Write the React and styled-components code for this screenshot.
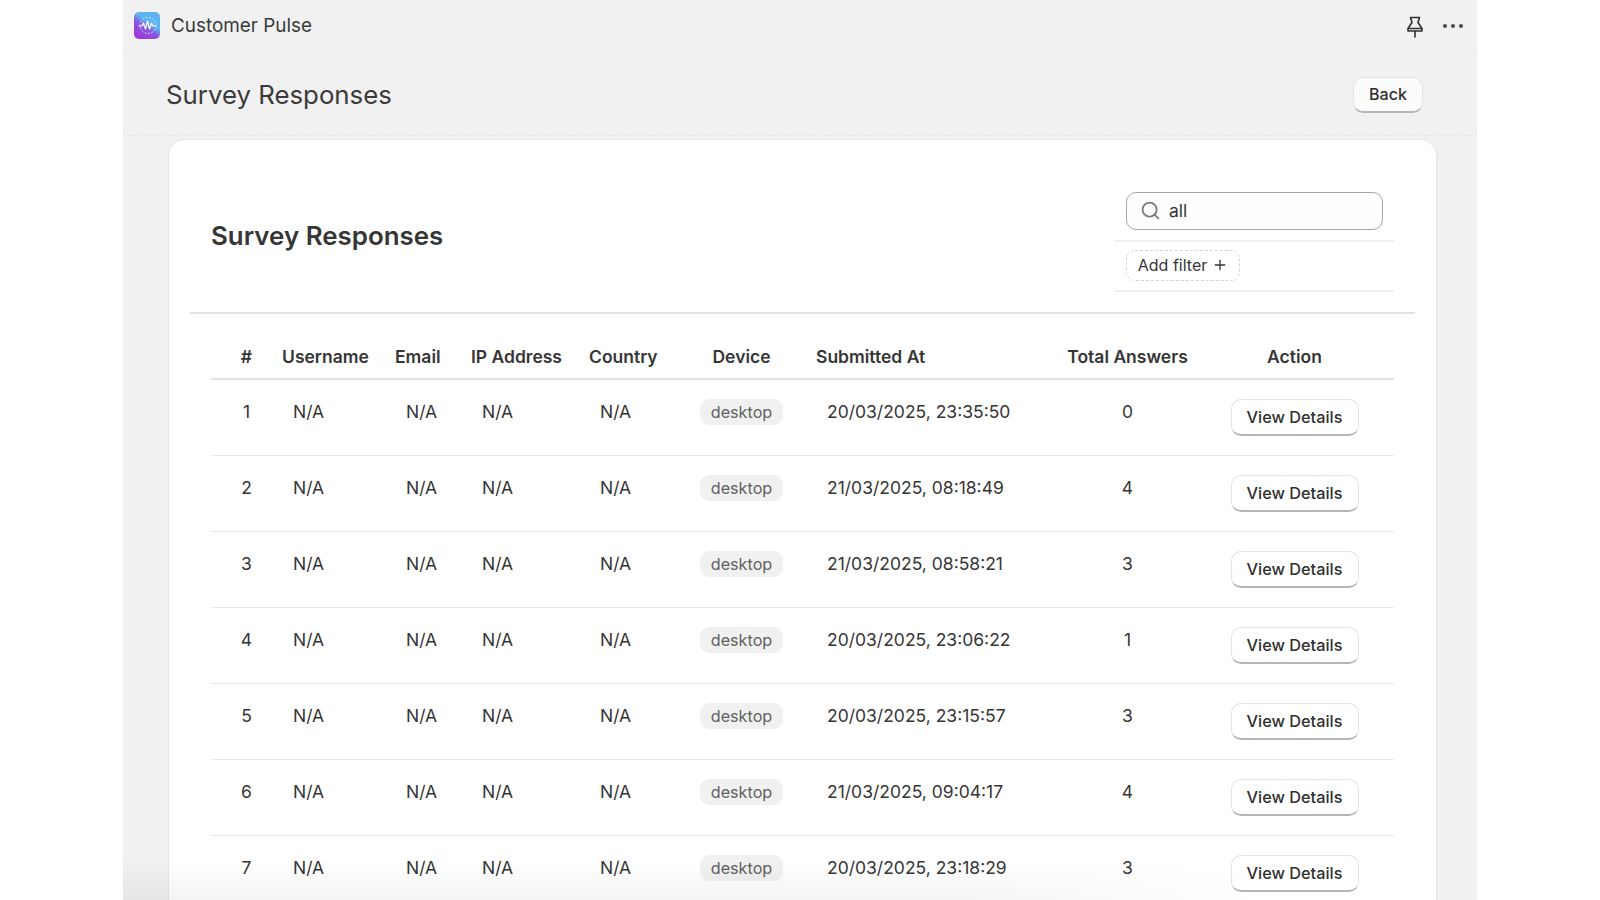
import React from 'react';
import styled, { createGlobalStyle } from 'styled-components';
import { Search, Plus } from 'lucide-react';

const GlobalStyle = createGlobalStyle`
  html, body {
    margin: 0;
    height: 100%;
    overflow: hidden;
    background: #fff;
    font-family: Inter, "Liberation Sans", sans-serif;
    color: #363636;
  }
`;

const columns = '71px 113px 76px 118px 78px 149px 244px 135px 199px';

const rows = [
  [1, '20/03/2025, 23:35:50', 0],
  [2, '21/03/2025, 08:18:49', 4],
  [3, '21/03/2025, 08:58:21', 3],
  [4, '20/03/2025, 23:06:22', 1],
  [5, '20/03/2025, 23:15:57', 3],
  [6, '21/03/2025, 09:04:17', 4],
  [7, '20/03/2025, 23:18:29', 3],
];

const AppLogo = () => (
  <svg width="26" height="27" viewBox="0 0 26 27">
    <defs>
      <linearGradient id="logoBg" x1="0.8" y1="0.05" x2="0.2" y2="0.95">
        <stop offset="0.38" stopColor="#5cb4f4" />
        <stop offset="0.6" stopColor="#8a55e0" />
        <stop offset="1" stopColor="#9d38d6" />
      </linearGradient>
    </defs>
    <rect width="26" height="27" rx="5" fill="url(#logoBg)" />
    <circle cx="14" cy="13.500" r="8" fill="none" stroke="#fff" strokeOpacity=".7" strokeWidth="1" strokeDasharray="2 1.500" />
    <path d="M4.500 14h3.500l1.500-3 2 6 2-8 2 8 2-6 1.500 3h3" fill="none" stroke="#fff" strokeWidth="1.200" strokeLinejoin="round" />
  </svg>
);

const PinIcon = () => (
  <svg width="20" height="24" viewBox="0 0 20 24" fill="none" stroke="#303030" strokeWidth="1.600" strokeLinejoin="round" strokeLinecap="round">
    <path d="M5.500 3.500h9l-1.500 5 4 6v2.500H3v-2.500l4-6z" />
    <path d="M3.500 14.500h13" />
    <path d="M10 17v6" />
  </svg>
);

const Dots = () => (
  <DotsWrap>
    <Dot />
    <Dot />
    <Dot />
  </DotsWrap>
);

export default function App() {
  return (
    <>
      <GlobalStyle />
      <Window>
        <TitleBar>
          <AppName>
            <AppLogo />
            <span>Customer Pulse</span>
          </AppName>
          <TitleActions>
            <PinIcon />
            <Dots />
          </TitleActions>
        </TitleBar>

        <PageHeader>
          <PageTitle>Survey Responses</PageTitle>
          <BackButton>Back</BackButton>
        </PageHeader>

        <Card>
          <CardHead>
            <CardTitle>Survey Responses</CardTitle>
            <Filters>
              <SearchRow>
                <SearchBox>
                  <Search size={21} color="#7a7a7a" strokeWidth={2} />
                  <span>all</span>
                </SearchBox>
              </SearchRow>
              <FilterRow>
                <AddFilter>
                  Add filter
                  <Plus size={16} strokeWidth={2} />
                </AddFilter>
              </FilterRow>
            </Filters>
          </CardHead>

          <Table>
            <HeadRow>
              <Th $center>#</Th>
              <Th>Username</Th>
              <Th>Email</Th>
              <Th>IP Address</Th>
              <Th>Country</Th>
              <Th $center>Device</Th>
              <Th>Submitted At</Th>
              <Th $center>Total Answers</Th>
              <Th $center>Action</Th>
            </HeadRow>
            {rows.map(([id, date, total]) => (
              <Row key={id}>
                <Td $center>{id}</Td>
                <Td $pad>N/A</Td>
                <Td $pad>N/A</Td>
                <Td $pad>N/A</Td>
                <Td $pad>N/A</Td>
                <Td $center>
                  <Chip>desktop</Chip>
                </Td>
                <Td $pad>{date}</Td>
                <Td $center>{total}</Td>
                <Td $center>
                  <ViewButton>View Details</ViewButton>
                </Td>
              </Row>
            ))}
          </Table>
        </Card>
        <BottomFade />
      </Window>
    </>
  );
}

const Window = styled.div`
  position: relative;
  width: 1354px;
  height: 100vh;
  margin: 0 auto;
  overflow: hidden;
  background: #f1f1f1;
`;

const TitleBar = styled.div`
  height: 53px;
  box-sizing: content-box;
  padding: 0 14px 0 11px;
  display: flex;
  align-items: center;
  justify-content: space-between;
  border-bottom: 1px solid #ebebeb;

  & > * {
    margin-bottom: 2px;
  }
`;

const AppName = styled.div`
  display: flex;
  align-items: center;
  gap: 11px;
  font-size: 18.900px;
  color: #3a3a3a;
`;

const TitleActions = styled.div`
  display: flex;
  align-items: center;
  gap: 18px;
`;

const DotsWrap = styled.div`
  display: flex;
  gap: 4px;
`;

const Dot = styled.div`
  width: 4px;
  height: 4px;
  border-radius: 50%;
  background: #4a4a4a;
`;

const PageHeader = styled.div`
  height: 81px;
  padding: 0 54px 0 43px;
  display: flex;
  align-items: center;
  justify-content: space-between;
  border-bottom: 1px dashed #e6e6e6;
`;

const PageTitle = styled.h1`
  margin: 0;
  font-size: 25.800px;
  font-weight: 400;
  color: #3a3a3a;
`;

const BackButton = styled.button`
  width: 70px;
  height: 36px;
  font: 500 16px Inter, sans-serif;
  color: #303030;
  background: #fbfbfb;
  border: 1px solid #e3e3e3;
  border-bottom: 2px solid #b5b5b5;
  border-radius: 10px;
`;

const Card = styled.div`
  margin: 3px 40px 0 45px;
  padding: 0 21px;
  min-height: 800px;
  background: #fff;
  border: 1px solid #e6e6e6;
  border-bottom: 0;
  border-radius: 16px 16px 0 0;
`;

const CardHead = styled.div`
  height: 174px;
  box-sizing: border-box;
  padding: 53px 21px 23px;
  display: flex;
  align-items: center;
  justify-content: space-between;
  border-bottom: 2px solid #e3e3e3;
`;

const CardTitle = styled.h2`
  margin: 0 0 11px;
  font-size: 25.900px;
  font-weight: 600;
  color: #363636;
`;

const Filters = styled.div`
  width: 280px;
`;

const SearchRow = styled.div`
  padding: 1px 11px 10px 12px;
  border-bottom: 2px solid #f0f0f0;
`;

const SearchBox = styled.div`
  height: 38px;
  box-sizing: border-box;
  padding: 0 13px;
  display: flex;
  align-items: center;
  gap: 8px;
  font-size: 17.500px;
  background: #fdfdfd;
  border: 1px solid #a8a8a8;
  border-radius: 10px;
`;

const FilterRow = styled.div`
  padding: 8px 11px 9px 12px;
  border-bottom: 2px solid #f0f0f0;
`;

const AddFilter = styled.div`
  width: 114px;
  height: 31px;
  box-sizing: border-box;
  display: inline-flex;
  align-items: center;
  justify-content: center;
  gap: 5px;
  font-size: 16px;
  border: 1px dashed #d4d4d4;
  border-radius: 9px;
`;

const Table = styled.div`
  padding: 0 21px;
`;

const HeadRow = styled.div`
  height: 65.500px;
  box-sizing: border-box;
  padding-bottom: 8.500px;
  display: grid;
  grid-template-columns: ${columns};
  align-items: end;
  border-bottom: 2px solid #e3e3e3;
`;

const Th = styled.div`
  font-size: 17.500px;
  font-weight: 600;
  line-height: 24px;
  white-space: nowrap;
  text-align: ${(p) => (p.$center ? 'center' : 'left')};
`;

const Row = styled.div`
  height: 76px;
  box-sizing: border-box;
  padding-top: 19px;
  display: grid;
  grid-template-columns: ${columns};
  align-items: start;
  border-bottom: 1px solid #ebebeb;
`;

const Td = styled.div`
  font-size: 17.500px;
  line-height: 26px;
  white-space: nowrap;
  padding-left: ${(p) => (p.$pad ? '11px' : '0')};
  text-align: ${(p) => (p.$center ? 'center' : 'left')};
`;

const Chip = styled.span`
  display: inline-block;
  width: 83px;
  height: 26px;
  line-height: 26px;
  font-size: 16.200px;
  color: #616161;
  background: #f1f1f1;
  border-radius: 9px;
`;

const ViewButton = styled.button`
  width: 128px;
  height: 37px;
  font: 500 16.300px Inter, sans-serif;
  color: #303030;
  background: #fff;
  border: 1px solid #e3e3e3;
  border-bottom: 2px solid #b5b5b5;
  border-radius: 10px;
`;

const BottomFade = styled.div`
  position: absolute;
  left: 0;
  right: 0;
  bottom: 0;
  height: 40px;
  background: linear-gradient(to bottom, rgba(0, 0, 0, 0), rgba(0, 0, 0, 0.045));
  mask-image: linear-gradient(to right, #000 60%, transparent 84%);
  pointer-events: none;
`;
